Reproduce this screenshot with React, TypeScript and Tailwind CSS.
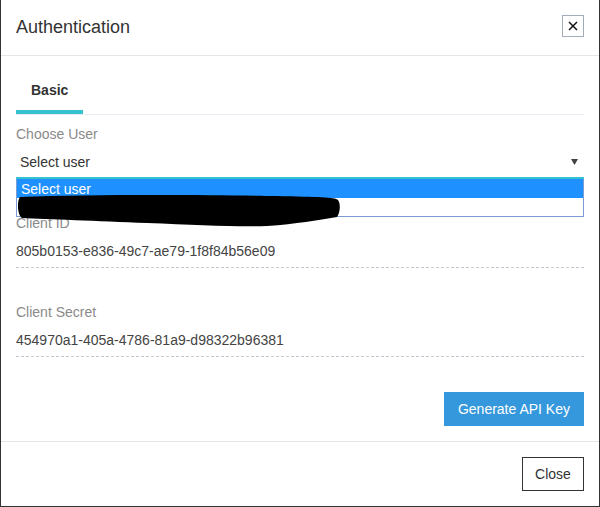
import React from 'react'

const Field: React.FC<{ label: string; value: string; top: string }> = ({ label, value, top }) => (
  <div className={top}>
    <div className="text-[14px] leading-[16px] text-[#8a8a8a]">{label}</div>
    <div className="mt-[2px] flex h-[35px] items-center border-b border-dashed border-[#c6c9d3] pt-[2px] text-[14px] leading-[16px] text-[#444]">
      {value}
    </div>
  </div>
)

export default function App() {
  return (
    <div className="flex h-[507px] w-[600px] flex-col border-x border-b border-[#333] bg-white font-['Liberation_Sans',Arial,sans-serif] text-[#333]">
      <div className="flex h-[56px] items-start justify-between border-b border-[#e5e5e5] px-[15px]">
        <h1 className="mt-[17px] text-[18px] leading-[20px] text-[#333]">Authentication</h1>
        <button className="mt-[15px] flex h-[22px] w-[22px] items-center justify-center border border-[#a3adb8] bg-white">
          <svg width="10" height="10" viewBox="0 0 10 10">
            <path d="M1 1L9 9M9 1L1 9" stroke="#111" strokeWidth="1.5" fill="none" />
          </svg>
        </button>
      </div>

      <div className="relative flex-1 px-[15px]">
        <div className="flex border-b border-[#ebebf3] pt-[26px]">
          <div className="border-b-4 border-[#35c1cd] px-[15px] pb-[12px] text-[14px] font-bold leading-[16px] text-[#333]">
            Basic
          </div>
        </div>

        <div className="mt-[11px] text-[14px] leading-[16px] text-[#8a8a8a]">Choose User</div>
        <div className="relative">
          <div className="flex h-[37px] items-center justify-between border-b-2 border-[#35c1cd] pt-[4px] pl-[4px] pr-[6px] text-[14px] leading-[16px] text-[#333]">
            <span>Select user</span>
            <svg width="7" height="6" viewBox="0 0 7 6">
              <path d="M0 0H7L3.5 6Z" fill="#444" />
            </svg>
          </div>
          <div className="absolute left-0 right-0 top-full z-10 border-x border-b border-[#7b9dd4] bg-white text-[14px] leading-[16px]">
            <div className="flex h-[19px] items-center bg-[#1e90ff] pl-[4px] text-white">Select user</div>
            <div className="h-[18px] bg-white pl-[4px]"></div>
          </div>
          <svg
            className="absolute left-[1px] top-[52px] z-20"
            width="326"
            height="34"
            viewBox="0 0 326 34"
          >
            <path
              d="M3 3 C80 0 200 1 260 2 C300 3 318 3 321 6 C324 10 323 19 320 23 C300 26 280 30 250 32 C220 33 180 31 130 29 C80 27 30 25 5 24 C0 21 0 6 3 3 Z"
              fill="#000"
            />
          </svg>
        </div>

        <Field top="mt-[36px]" label="Client ID" value="805b0153-e836-49c7-ae79-1f8f84b56e09" />
        <Field top="mt-[36px]" label="Client Secret" value="454970a1-405a-4786-81a9-d98322b96381" />

        <div className="mt-[35px] flex justify-end">
          <button className="h-[34px] bg-[#3598dc] px-[14px] text-[14px] leading-[16px] text-white">
            Generate API Key
          </button>
        </div>
      </div>

      <div className="flex h-[65px] items-center justify-end border-t border-[#e5e5e5] px-[15px]">
        <button className="h-[34px] w-[62px] border border-[#333] bg-white text-[14px] leading-[16px] text-[#333]">
          Close
        </button>
      </div>
    </div>
  )
}
